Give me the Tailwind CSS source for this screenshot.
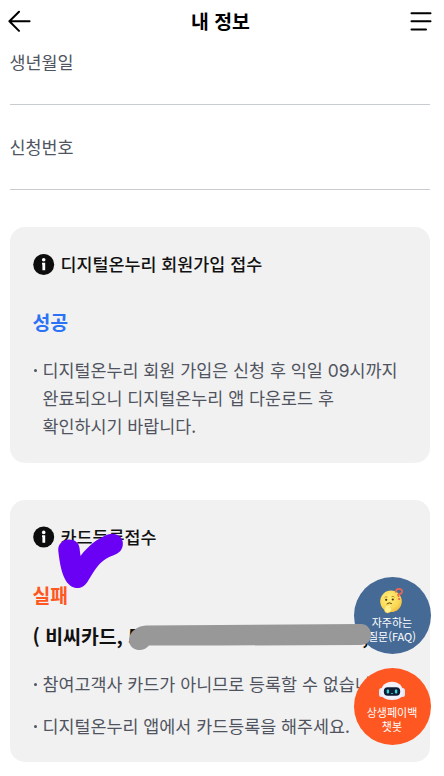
<!doctype html>
<html lang="ko">
<head>
	<meta charset="UTF-8">
	<meta name="viewport" content="width=device-width, initial-scale=1.0">
	<title>내 정보</title>
	<script src="https://cdn.jsdelivr.net/npm/@tailwindcss/browser@4"></script>
</head>
<body class="bg-white font-['Noto_Sans_CJK_KR',sans-serif] text-[17.4px] text-[#50545f]">
	<div class="relative w-[444px] h-[776px] overflow-hidden">
	<header class="h-[42px] pl-2 pr-[12px] flex items-center justify-between text-black">
		<svg class="w-[23px] h-[22px]" viewBox="0 0 23 22" fill="none" stroke="currentColor" stroke-width="2" stroke-linecap="round" stroke-linejoin="round">
			<path d="M11 1.700 1.400 11.300 11 20.900M1.400 11.300H21.600"/>
		</svg>
		<h1 class="text-[19.4px] leading-[42px] font-bold">내 정보</h1>
		<svg class="w-[22px] h-[20px]" viewBox="0 0 22 20" fill="none" stroke="currentColor" stroke-width="2" stroke-linecap="round">
			<path d="M1.500 2.300H20.500M1.500 10.300H20.500M1.500 18.500H16"/>
		</svg>
	</header>

	<main class="pl-[9.5px] pr-[14px]">
		<div class="h-[63px] pt-[5px] border-b border-[#c9ccd1] leading-[30px]">생년월일</div>
		<div class="h-[85px] pt-[27px] border-b border-[#c9ccd1] leading-[30px]">신청번호</div>

		<section class="mt-[37px] h-[236px] rounded-[15px] bg-[#f1f1f1] px-[23px] pt-[22px]">
			<div class="flex items-center gap-[6px] h-[30px] text-[#111]">
				<svg class="w-[22px] h-[22px]" viewBox="0 0 22 22">
					<circle cx="10.700" cy="11.500" r="10.500" fill="#0d0d0d"/>
					<circle cx="10.700" cy="6.700" r="1.800" fill="#fff"/>
					<path d="M9 9.800h3.200v7.400H9.400V11.500H9z" fill="#fff"/>
				</svg>
				<h2 class="font-medium leading-[30px]">디지털온누리 회원가입 접수</h2>
			</div>
			<p class="mt-[28px] text-[19.4px] leading-[30px] font-bold text-[#2b72f5]">성공</p>
			<ul class="mt-[19px]">
				<li class="flex leading-[28px] whitespace-nowrap">
					<span class="mt-[13px] ml-[1px] mr-[6px] size-[3px] shrink-0 rounded-full bg-[#50545f]"></span>
					<span>디지털온누리 회원 가입은 신청 후 익일 <span class="font-['Inter','Noto_Sans_CJK_KR',sans-serif] leading-[20px]">09</span>시까지<br>완료되오니 디지털온누리 앱 다운로드 후<br>확인하시기 바랍니다.</span>
				</li>
			</ul>
		</section>

		<section class="mt-[37px] h-[262px] rounded-[15px] bg-[#f1f1f1] px-[23px] pt-[22px]">
			<div class="flex items-center gap-[6px] h-[30px] text-[#111]">
				<svg class="w-[22px] h-[22px]" viewBox="0 0 22 22">
					<circle cx="10.700" cy="11" r="10.500" fill="#0d0d0d"/>
					<circle cx="10.700" cy="6.400" r="1.800" fill="#fff"/>
					<path d="M9 9.300h3.200v7.400H9.400V11H9z" fill="#fff"/>
				</svg>
				<h2 class="font-medium leading-[30px]">카드등록접수</h2>
			</div>
			<p class="mt-[28px] text-[19.4px] leading-[30px] font-bold text-[#ff5722]">실패</p>
			<p class="mt-[11px] flex justify-between w-[336px] text-[19.4px] leading-[30px] font-bold text-[#111]"><span>( 비씨카드, 5</span><span>,</span></p>
			<ul class="mt-[19px] flex flex-col gap-[14px]">
				<li class="flex leading-[28px] whitespace-nowrap">
					<span class="mt-[13px] ml-[1px] mr-[6px] size-[3px] shrink-0 rounded-full bg-[#50545f]"></span>
					<span>참여고객사 카드가 아니므로 등록할 수 없습니</span>
				</li>
				<li class="flex leading-[28px] whitespace-nowrap">
					<span class="mt-[13px] ml-[1px] mr-[6px] size-[3px] shrink-0 rounded-full bg-[#50545f]"></span>
					<span>디지털온누리 앱에서 카드등록을 해주세요.</span>
				</li>
			</ul>
		</section>
	</main>

	<!-- floating buttons -->
	<div class="absolute left-[353.5px] top-[576.5px] flex flex-col gap-[14px] text-[11px] leading-[14px] text-white text-center">
		<a class="size-[77px] rounded-full bg-[#456a96] pt-[10px] flex flex-col items-center">
			<svg class="w-[26px] h-[27px]" viewBox="0 0 26 27">
				<defs>
					<radialGradient id="face" cx=".4" cy=".35" r=".7">
						<stop offset="0" stop-color="#fff07a"/>
						<stop offset=".7" stop-color="#fad854"/>
						<stop offset="1" stop-color="#f2b942"/>
					</radialGradient>
				</defs>
				<circle cx="12" cy="14.300" r="10.800" fill="url(#face)"/>
				<path d="M5.500 10.800q1.300-1.600 3-.8M12.500 9.700q1.800-.8 3 .6" fill="none" stroke="#a97925" stroke-width=".8"/>
				<circle cx="7.200" cy="12.800" r="1.100" fill="#4d3210"/>
				<circle cx="13.800" cy="12.500" r="1.100" fill="#4d3210"/>
				<path d="M8 16.800q2.300-2 4.500-.4" fill="none" stroke="#6b4010" stroke-width="1" stroke-linecap="round"/>
				<path d="M5.500 23.500q-.5-3.500 2-5l4.700-1q1.400.2.300 1.400l-1.700 1.200q2.700.3 1.700 3.100-1.400 3-4.200 2.700Q6 25.600 5.500 23.500z" fill="#fff08c" stroke="#f3c64b" stroke-width=".5"/>
				<path d="M16.800 4.800q.2-3 3.500-2.900 3.200.3 2.800 3-.4 2-4 2.700l.5 1.500" fill="none" stroke="#ee6750" stroke-width="1.800" stroke-linecap="round" stroke-linejoin="round"/>
				<circle cx="20.100" cy="12" r="1.100" fill="#ee6750"/>
			</svg>
			<span class="mt-[1px]">자주하는<br>질문(FAQ)</span>
		</a>
		<a class="size-[77px] rounded-full bg-[#ff5722] pt-[13px] flex flex-col items-center">
			<svg class="w-[28px] h-[20px]" viewBox="0 0 28 20">
				<rect x="1" y="7" width="5" height="9" rx="2.500" fill="#e4e5f8"/>
				<rect x="22" y="7" width="5" height="9" rx="2.500" fill="#e4e5f8"/>
				<path d="M14 .8C20.500.8 25 5 25 11q0 8-11 8T3 11C3 5 7.500.8 14 .8z" fill="#f1f1fc"/>
				<rect x="5.800" y="6.300" width="16.400" height="8.400" rx="4" fill="#101b35"/>
				<rect x="8.700" y="8.500" width="2.400" height="4" rx="1" fill="#36d8d2"/>
				<rect x="16.900" y="8.500" width="2.400" height="4" rx="1" fill="#36d8d2"/>
				<path d="M13 12.300q1 .8 2 0" fill="none" stroke="#36d8d2" stroke-width=".8"/>
			</svg>
			<span class="mt-[4px]">상생페이백<br>챗봇</span>
		</a>
	</div>

	<!-- pen marks over the card -->
	<svg class="absolute left-0 top-0 w-[444px] h-[776px] pointer-events-none" viewBox="0 0 444 776">
		<path d="M58.300 551C57.500 544 63 539.500 69 539.500C75 539.500 79 543 79.500 548L80.500 556C88 546 98 538 108 534.500C115 532 122.500 536 122.800 543C123 550 119.500 553 113 555.500C98 561 94 572 88 581C84 588 78 589 74 587.500C63 584 60 566 58.300 551z" fill="#6a00f4"/>
		<path d="M129 640C129 632 137 626 146 625.500L220 625L361 624C367 624 371 629 371 634.500C371 641 367 645 360 645L220 645.500L149 645.500C146 649 142 650.500 138 650C132 649 129 645 129 640z" fill="#989898"/>
	</svg>
	</div>
</body>
</html>
